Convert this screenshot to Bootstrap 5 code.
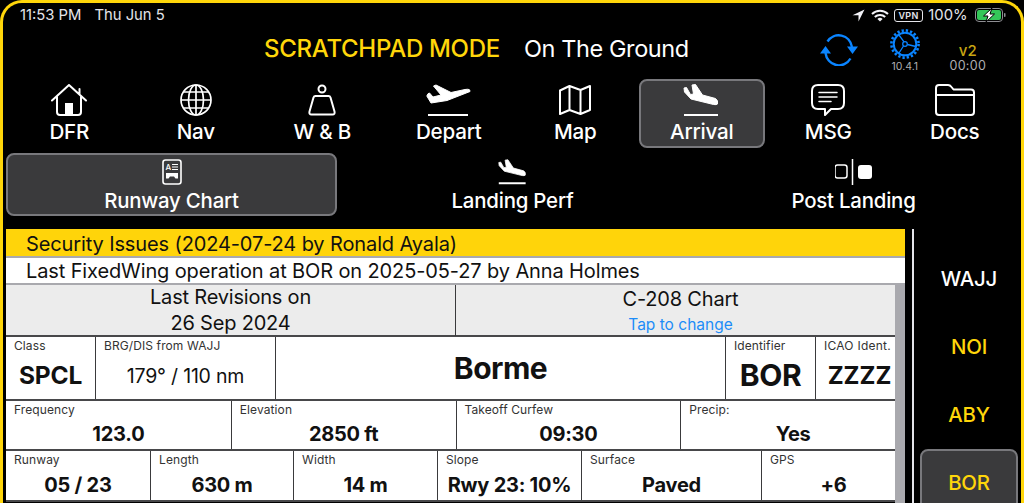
<!DOCTYPE html>
<html lang="en">
<head>
<meta charset="utf-8">
<title>Scratchpad</title>
<link href="https://cdn.jsdelivr.net/npm/bootstrap@5.3.0/dist/css/bootstrap.min.css" rel="stylesheet">
<style>
html,body{height:503px;overflow:hidden;background:#000;}
body{font-family:Inter,"Liberation Sans",sans-serif;color:#fff;}
.frame{height:503px;border:3px solid #ffd60a;border-bottom:0;border-radius:22px 22px 0 0;background:#000;overflow:hidden;}
.status{height:24px;padding:0 15px 0 17px;font-size:14.8px;color:#e5e5ea;font-weight:400;}
.status-gap{width:13px;}
.st-right{gap:5.5px;}
.st-batt{margin-left:2px;}
.vpn{border:1.3px solid #e5e5ea;border-radius:3px;font-size:9px;font-weight:600;line-height:11px;padding:0 3px;letter-spacing:.4px;}
.titlebar{height:51px;padding:0 0 8px 261px;}
.t-mode{font-size:24px;font-weight:500;color:#ffd60a;letter-spacing:-.3px;white-space:nowrap;}
.t-state{font-size:23.5px;font-weight:400;margin-left:24px;letter-spacing:-.4px;white-space:nowrap;}
.t-sync{margin-left:131px;margin-top:2px;}
.t-gear{margin-left:30px;width:34px;margin-top:4px;gap:2px;}
.t-ver{width:60px;margin-left:16px;margin-top:18px;}
.tiny{font-size:10.5px;color:#aeaeb2;line-height:12px;white-space:nowrap;}
.tiny-lg{font-size:12.5px;line-height:14px;letter-spacing:.3px;}
.v2{font-size:15px;font-weight:500;color:#c8a512;line-height:17px;}
.mainnav{height:71px;padding:1px 3px 1px;}
.navitem{flex:1 1 0;min-width:0;border:2px solid transparent;border-radius:8px;color:#fff;text-decoration:none;font-size:20.6px;font-weight:500;line-height:22px;letter-spacing:-.2px;padding:3px 0 0;}
.navitem svg{display:block;margin-bottom:5px;}
.navitem.on,.subitem.on,.sideitem.on{background:#3a3a3c;border-color:#78787c;}
.subnav{height:65px;margin-top:3px;padding:1px 2px 1px 3px;gap:10px;}
.subitem{flex:1 1 0;min-width:0;border:2px solid transparent;border-radius:8px;color:#fff;text-decoration:none;font-size:20.4px;font-weight:500;line-height:22px;letter-spacing:-.2px;padding:4px 0 0;}
.subitem svg{display:block;margin-bottom:5px;}
.mainarea{margin-top:12px;height:274px;padding-left:3px;}
.sheet{width:899px;position:relative;color:#111;overflow:hidden;}
.banner{height:29px;padding:2px 0 0 20px;font-size:20px;line-height:26px;letter-spacing:-.12px;border-bottom:2px solid #a9a9ae;white-space:nowrap;}
.bn-y{background:#ffd40a;}
.bn-w{background:#fff;height:27px;line-height:25px;padding-top:1px;}
.tr{display:grid;border-bottom:2px solid #48484a;background:#fff;}
.tr-a{grid-template-columns:449fr 450fr;height:52px;background:#ececec;}
.tr-b{grid-template-columns:89px 180px 450px 90px 90px;height:64px;}
.tr-c{grid-template-columns:repeat(4,1fr);height:50px;}
.tr-d{grid-template-columns:144px 143px 144px 144px 180px 144px;height:51px;}
.td{border-left:1.5px solid #3a3a3c;position:relative;min-width:0;text-align:center;padding:0 2px;}
.td:first-child{border-left:0;}
.lb{font-size:12px;line-height:14px;color:#333;text-align:left;padding:2px 0 0 6px;white-space:nowrap;letter-spacing:.1px;}
.val{font-size:20px;font-weight:700;line-height:24px;letter-spacing:-.25px;white-space:nowrap;}
.tr-c .val{margin-top:5px;}
.tr-d .val{margin-top:6px;}
.rev{font-size:20px;line-height:26px;letter-spacing:-.2px;margin-top:-1px;}
.rev2{font-size:20px;line-height:26px;letter-spacing:-.2px;}
.rev-chart{margin-top:0;padding-top:1px;}
.tap{font-size:15.5px;line-height:22px;color:#1d8cf8;padding-top:2px;}
.big{font-size:30px;font-weight:700;line-height:32px;letter-spacing:-.4px;margin-top:6px;}
.big-class{font-size:24.5px;letter-spacing:-.2px;}
.mid{font-size:19.5px;font-weight:400;line-height:30px;margin-top:8px;letter-spacing:-.2px;white-space:nowrap;}
.name{font-size:30px;font-weight:700;line-height:62px;letter-spacing:-.5px;}
.zz{font-size:24px;font-weight:700;line-height:32px;margin-top:7px;padding-right:2px;}
.td-icao .lb{padding-left:6px;letter-spacing:.25px;}
.scrollthumb{position:absolute;top:55px;right:0;bottom:0;width:10px;background:#a9a9ae;}
.side{flex:1 1 0;border-left:2px solid #e5e5ea;margin-left:7px;padding:0 3px 0 6px;overflow:hidden;}
.sideitem{height:68px;border:2px solid transparent;border-radius:8px 8px 0 0;font-size:20.4px;font-weight:500;text-decoration:none;color:#ffd60a;letter-spacing:-.2px;flex:none;padding-top:1px;}
.sideitem.first{margin-top:16px;color:#fff;}
.sideitem.on{height:70px;padding-top:0;padding-bottom:2px;margin-top:0;}
</style>
</head>
<body>
<div class="frame d-flex flex-column">
  <div class="status d-flex align-items-center justify-content-between flex-none">
    <div class="d-flex"><span>11:53 PM</span><span class="status-gap"></span><span>Thu Jun 5</span></div>
    <div class="d-flex align-items-center st-right">
      <svg width="13" height="13" viewBox="0 0 13 13"><path d="M12.500 .5 .5 6.200h6V12.500z" fill="#f2f2f7"/></svg>
      <svg width="18" height="13" viewBox="0 0 18 13" fill="none" stroke="#f2f2f7" stroke-width="2"><path d="M1 5a11.500 11.500 0 0 1 16 0M3.800 8a7.500 7.500 0 0 1 10.400 0"/><path d="M9 12.500 6.400 10a3.700 3.700 0 0 1 5.200 0z" fill="#f2f2f7" stroke="none"/></svg>
      <span class="vpn">VPN</span>
      <span>100%</span>
      <svg class="st-batt" width="31" height="14" viewBox="0 0 31 14"><rect x=".5" y=".5" width="27" height="13" rx="3.500" fill="none" stroke="#8e8e93"/><rect x="2" y="2" width="24" height="10" rx="2" fill="#34c759"/><rect x="29" y="5" width="1.500" height="4" rx=".7" fill="#8e8e93"/><path d="M17 0 8.500 8h4.500L11 14l8.500-8h-4.500z" fill="#fff" stroke="#000" stroke-width="1"/></svg>
    </div>
  </div>

  <div class="titlebar d-flex align-items-center flex-none">
    <span class="t-mode">SCRATCHPAD MODE</span>
    <span class="t-state">On The Ground</span>
    <svg class="t-sync" width="38" height="32" viewBox="0 0 38 32" fill="none" stroke="#0a84ff" stroke-width="2.400"><path d="M7.500 7.500A13.500 14 0 0 1 32 13"/><path d="M5.500 19A13.500 14 0 0 0 30.500 24.500"/><path d="M0 19.500h11L5.500 12zM38 12.500H27L32.500 20z" fill="#0a84ff" stroke="none"/></svg>
    <div class="t-gear d-flex flex-column align-items-center">
      <svg width="30" height="30" viewBox="0 0 30 30" fill="none" stroke="#0a84ff"><circle cx="15" cy="15" r="13.600" stroke-width="2.600" stroke-dasharray="2.300 2"/><circle cx="15" cy="15" r="11.300" stroke-width="2"/><circle cx="15" cy="15" r="2.300" stroke-width="1.300"/><path d="M14 12.800 9 6M17.400 15.500 26 17.500M13.500 17 9 24" stroke-width="1.300"/></svg>
      <span class="tiny">10.4.1</span>
    </div>
    <div class="t-ver d-flex flex-column align-items-center">
      <span class="v2">v2</span>
      <span class="tiny tiny-lg">00:00</span>
    </div>
  </div>

  <nav class="mainnav d-flex flex-none">
    <a class="navitem d-flex flex-column align-items-center" href="#">
      <svg width="36" height="32" viewBox="0 0 36 32" fill="none" stroke="#fff" stroke-width="2" stroke-linecap="round" stroke-linejoin="round"><path d="M1 16.500 18 1l17 15.500M28.500 5v5"/><path d="M6 13v15q0 3 3 3h18q3 0 3-3V13"/><rect x="14" y="19" width="8" height="12" fill="#fff" stroke="none"/></svg>
      <span>DFR</span></a>
    <a class="navitem d-flex flex-column align-items-center" href="#">
      <svg width="32" height="32" viewBox="0 0 32 32" fill="none" stroke="#fff" stroke-width="1.700"><circle cx="16" cy="16" r="15"/><ellipse cx="16" cy="16" rx="7.500" ry="15"/><path d="M16 1v30M1 16h30M3.500 8h25M3.500 24h25"/></svg>
      <span>Nav</span></a>
    <a class="navitem d-flex flex-column align-items-center" href="#">
      <svg width="32" height="32" viewBox="0 0 32 32" fill="none" stroke="#fff" stroke-width="2" stroke-linejoin="round"><circle cx="16" cy="5" r="3.500"/><path d="M9.500 12h13q1.500 0 2 1.500l4 14q.7 3-2 3H5.500q-2.700 0-2-3l4-14q.5-1.500 2-1.500z"/></svg>
      <span>W &amp; B</span></a>
    <a class="navitem d-flex flex-column align-items-center" href="#">
      <svg width="46" height="32" viewBox="0 0 46 32" fill="#fff" stroke="#fff" stroke-linejoin="round"><path d="M.8 12 5 19l16-2.500 23-9q.5-3-5-2L25 8.500 10 1 7.500 2 15 11l-8 2-3.500-4-1.500.7z"/><rect x="2" y="30" width="40" height="2" stroke="none"/></svg>
      <span>Depart</span></a>
    <a class="navitem d-flex flex-column align-items-center" href="#">
      <svg width="34" height="32" viewBox="0 0 34 32" fill="none" stroke="#fff" stroke-width="2" stroke-linejoin="round"><path d="M2 6.500 11.500 2l11 4L32 2v24l-9.500 4-11-4L2 30zM11.500 2v24M22.500 6v24"/></svg>
      <span>Map</span></a>
    <a class="navitem on d-flex flex-column align-items-center" href="#">
      <svg width="38" height="32" viewBox="0 0 38 32" fill="#fff" stroke="#fff" stroke-linejoin="round"><path d="M1 4 3.500 3.500l4 7 3-.5-1.500-9 3.500-.5 7 10.500 13 3.500q3 2 2 5.500q-1 1-4 .5L8 15 1.500 8z"/><rect x="1" y="30" width="34" height="2" stroke="none"/></svg>
      <span>Arrival</span></a>
    <a class="navitem d-flex flex-column align-items-center" href="#">
      <svg width="34" height="32" viewBox="0 0 34 32" fill="none" stroke="#fff" stroke-width="2" stroke-linejoin="round" stroke-linecap="round"><path d="M7 1h20q6 0 6 6v12q0 6-6 6H20l-6 6v-6H7q-6 0-6-6V7q0-6 6-6z"/><path d="M8 8.500h18M8 13h18M8 17.500h12" stroke-width="1.500"/></svg>
      <span>MSG</span></a>
    <a class="navitem d-flex flex-column align-items-center" href="#">
      <svg width="40" height="32" viewBox="0 0 40 32" fill="none" stroke="#fff" stroke-width="2" stroke-linejoin="round"><path d="M4 1h9q2 0 3.500 2l2 2.500H36q3 0 3 3V28q0 3-3 3H4q-3 0-3-3V4q0-3 3-3zM1 11h38"/></svg>
      <span>Docs</span></a>
  </nav>

  <nav class="subnav d-flex flex-none">
    <a class="subitem on d-flex flex-column align-items-center" href="#">
      <svg width="20" height="26" viewBox="0 0 20 26" fill="none" stroke="#fff"><rect x="1" y="1" width="18" height="24" rx="2.500" stroke-width="1.600"/><text x="3.500" y="11" font-size="8" fill="#fff" stroke="none" font-family="Inter,sans-serif">A</text><path d="M10 5.500h6M10 8h6M10 10.500h6" stroke-width="1"/><path d="M4 14h12v5.500h-2.500l-1.500-2H8l-1.500 2H4z" fill="#fff" stroke="none"/></svg>
      <span>Runway Chart</span></a>
    <a class="subitem d-flex flex-column align-items-center" href="#">
      <svg width="30" height="26" viewBox="0 0 38 32" fill="#fff" stroke="#fff" stroke-linejoin="round"><path d="M1 4 3.500 3.500l4 7 3-.5-1.500-9 3.500-.5 7 10.500 13 3.500q3 2 2 5.500q-1 1-4 .5L8 15 1.500 8z"/><rect x="1" y="29" width="34" height="2.500" stroke="none"/></svg>
      <span>Landing Perf</span></a>
    <a class="subitem d-flex flex-column align-items-center" href="#">
      <svg width="38" height="26" viewBox="0 0 38 26" fill="none" stroke="#fff"><rect x="0" y="6" width="12" height="13" rx="2.500" stroke-width="1.500"/><path d="M17.500 0v26" stroke-width="1.500"/><rect x="23" y="6" width="14" height="14" rx="3" fill="#fff" stroke="none"/></svg>
      <span>Post Landing</span></a>
  </nav>

  <div class="mainarea d-flex flex-none">
    <div class="sheet">
      <div class="banner bn-y">Security Issues (2024-07-24 by Ronald Ayala)</div>
      <div class="banner bn-w">Last FixedWing operation at BOR on 2025-05-27 by Anna Holmes</div>
      <div class="tr tr-a">
        <div class="td"><div class="rev">Last Revisions on</div><div class="rev2">26 Sep 2024</div></div>
        <div class="td"><div class="rev rev-chart">C-208 Chart</div><div class="tap">Tap to change</div></div>
      </div>
      <div class="tr tr-b">
        <div class="td"><div class="lb">Class</div><div class="big big-class">SPCL</div></div>
        <div class="td"><div class="lb">BRG/DIS from WAJJ</div><div class="mid">179° / 110 nm</div></div>
        <div class="td"><div class="name">Borme</div></div>
        <div class="td"><div class="lb">Identifier</div><div class="big">BOR</div></div>
        <div class="td td-icao"><div class="lb">ICAO Ident.</div><div class="zz">ZZZZ</div></div>
      </div>
      <div class="tr tr-c">
        <div class="td"><div class="lb">Frequency</div><div class="val">123.0</div></div>
        <div class="td"><div class="lb">Elevation</div><div class="val">2850 ft</div></div>
        <div class="td"><div class="lb">Takeoff Curfew</div><div class="val">09:30</div></div>
        <div class="td"><div class="lb">Precip:</div><div class="val">Yes</div></div>
      </div>
      <div class="tr tr-d">
        <div class="td"><div class="lb">Runway</div><div class="val">05 / 23</div></div>
        <div class="td"><div class="lb">Length</div><div class="val">630 m</div></div>
        <div class="td"><div class="lb">Width</div><div class="val">14 m</div></div>
        <div class="td"><div class="lb">Slope</div><div class="val">Rwy 23: 10%</div></div>
        <div class="td"><div class="lb">Surface</div><div class="val">Paved</div></div>
        <div class="td"><div class="lb">GPS</div><div class="val">+6</div></div>
      </div>
      <div class="scrollthumb"></div>
    </div>
    <div class="side d-flex flex-column">
      <a class="sideitem first d-flex align-items-center justify-content-center" href="#">WAJJ</a>
      <a class="sideitem d-flex align-items-center justify-content-center" href="#">NOI</a>
      <a class="sideitem d-flex align-items-center justify-content-center" href="#">ABY</a>
      <a class="sideitem on d-flex align-items-center justify-content-center" href="#">BOR</a>
    </div>
  </div>
</div>
<script src="https://cdn.jsdelivr.net/npm/bootstrap@5.3.0/dist/js/bootstrap.bundle.min.js"></script>
</body>
</html>
